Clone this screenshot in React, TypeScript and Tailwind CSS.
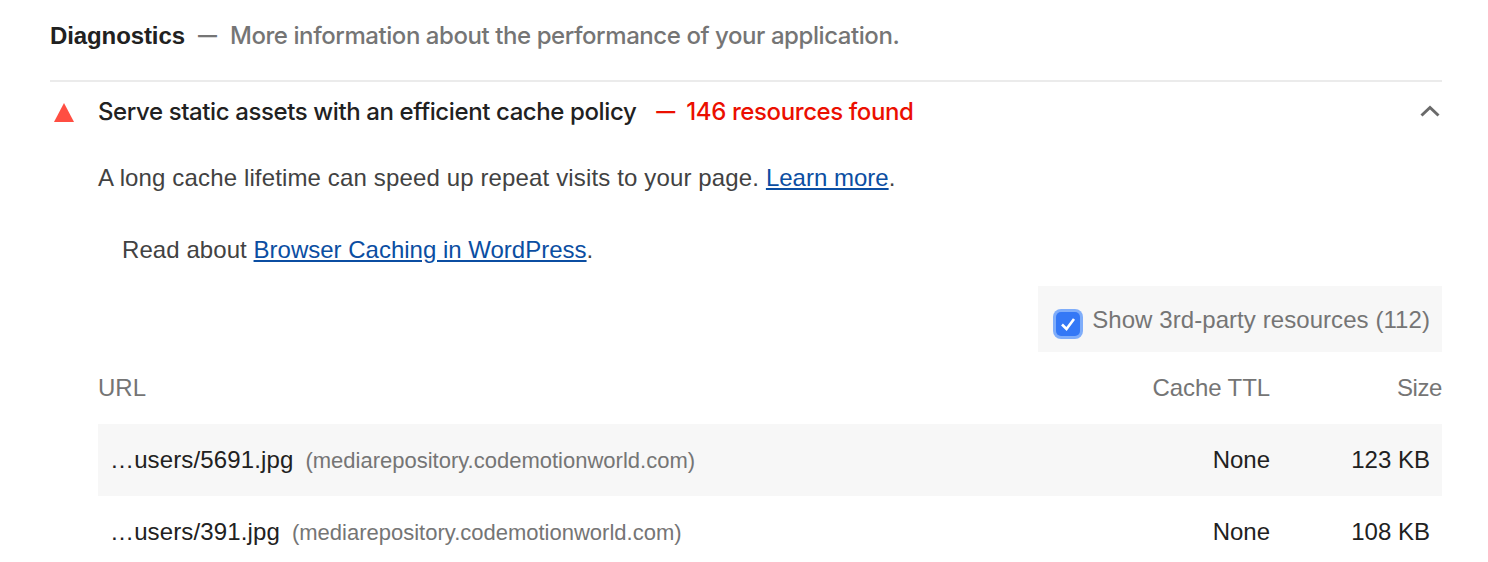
const rows = [
  { file: "…users/5691.jpg", ttl: "None", size: "123 KB", shaded: true },
  { file: "…users/391.jpg", ttl: "None", size: "108 KB", shaded: false },
];

export default function App() {
  return (
    <div className="h-[562px] overflow-hidden bg-white pl-[50px] pr-[46px] font-['Liberation_Sans',Arial,sans-serif] text-[24px] leading-[36px] text-[#212121]">
      {/* Section header */}
      <div className="flex h-[80px] items-start pt-[18px]">
        <span className="font-bold tracking-[-0.1px]">Diagnostics</span>
        <span className="ml-[13px] mr-[13px] font-['Inter',sans-serif] text-[19px] font-bold text-[#757575]">—</span>
        <span className="font-['Inter',sans-serif] font-medium tracking-[-0.43px] text-[#757575]">More information about the performance of your application.</span>
      </div>

      <div className="border-t-2 border-[#ebebeb]">
        {/* Audit title */}
        <div className="flex h-[60px] items-center font-['Inter',sans-serif] font-medium tracking-[-0.4px]">
          <div className="flex w-[48px] shrink-0 items-center">
            <svg width="28" height="24" viewBox="0 0 28 24">
              <path d="M14 3 L24 22 H4 Z" fill="#ff4e42" />
            </svg>
          </div>
          <span>Serve static assets with an efficient cache policy</span>
          <span className="ml-[20px] mr-[11px] text-[19px] font-bold tracking-normal text-[#eb0f00]">—</span>
          <span className="text-[#eb0f00]">146 resources found</span>
          <svg width="24" height="24" viewBox="0 0 24 24" className="ml-auto" fill="none">
            <path d="M3.5 15.5 L12 7.5 L20.5 15.5" stroke="#6a6a6a" strokeWidth="3" />
          </svg>
        </div>

        <div className="pl-[48px]">
          <p className="mt-[18px] tracking-[0.14px] text-[#424242]">
            A long cache lifetime can speed up repeat visits to your page.{" "}
            <a className="tracking-normal text-[#0b4ea2] underline">Learn more</a>.
          </p>
          <p className="mt-[36px] pl-[24px] tracking-[0.07px] text-[#424242]">
            Read about <a className="tracking-normal text-[#0b4ea2] underline">Browser Caching in WordPress</a>.
          </p>

          <div className="mt-[18px] flex justify-end tracking-[0.07px]">
            <label className="flex h-[66px] items-center bg-[#f7f7f7] pl-[18px] pr-[12px] text-[#757575]">
              <span className="mr-[12px] mt-[10px] flex h-[24px] w-[24px] items-center justify-center rounded-[5px] bg-[#3478f6] ring-[3px] ring-[#7fadfa]">
                <svg width="18" height="18" viewBox="0 0 18 18" fill="none">
                  <path d="M3 9.5 L7.5 14 L15 4" stroke="#fff" strokeWidth="2.6" />
                </svg>
              </span>
              <span className="mt-[1px]">Show 3rd-party resources (112)</span>
            </label>
          </div>

          {/* Table */}
          <div className="flex h-[72px] items-center tracking-normal text-[#757575]">
            <span className="flex-1">URL</span>
            <span className="w-[200px] text-right tracking-[-0.1px]">Cache TTL</span>
            <span className="w-[172px] text-right tracking-[-0.4px]">Size</span>
          </div>
          {rows.map((row) => (
            <div key={row.file} className={`flex h-[72px] items-center px-[12px] tracking-normal ${row.shaded ? "bg-[#f7f7f7]" : ""}`}>
              <div className="flex flex-1 items-baseline">
                <span className="tracking-[0.13px]">{row.file}</span>
                <span className="ml-[12px] text-[22px] text-[#757575]">(mediarepository.codemotionworld.com)</span>
              </div>
              <span className="w-[200px] text-right">{row.ttl}</span>
              <span className="w-[160px] text-right">{row.size}</span>
            </div>
          ))}
        </div>
      </div>
    </div>
  );
}
